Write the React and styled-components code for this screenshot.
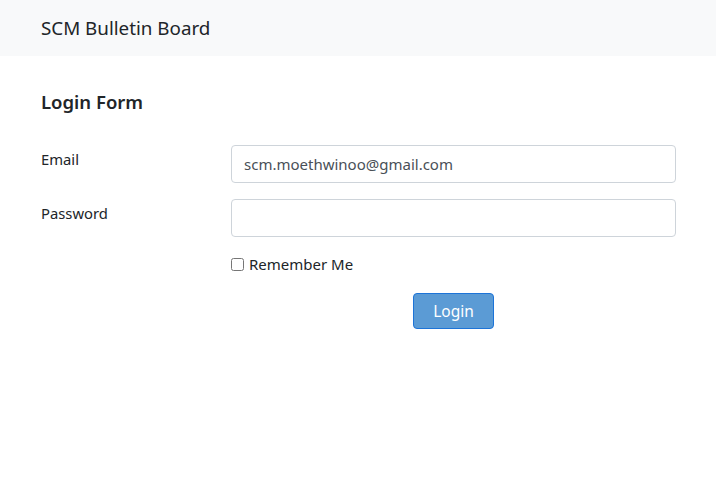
import React from 'react';
import styled, { createGlobalStyle } from 'styled-components';

const GlobalStyle = createGlobalStyle`
  body {
    margin: 0;
    background: #fff;
    font-family: "Noto Sans", "Open Sans", sans-serif;
    color: #212529;
  }
`;

const Navbar = styled.nav`
  height: 56px;
  background: #f8f9fa;
  display: flex;
  align-items: center;
  padding: 0 41px;
`;

const Brand = styled.span`
  font-size: 18.8px;
  color: #212529;
`;

const Main = styled.main`
  padding: 33px 40px 0 41px;
`;

const Title = styled.h2`
  margin: 0 0 31px;
  font-size: 18.5px;
  line-height: 25px;
  font-weight: 600;
`;

const Row = styled.div`
  display: grid;
  grid-template-columns: 190px 1fr;
  margin-bottom: ${({ gap }) => gap || 16}px;
`;

const Label = styled.label`
  font-size: 14.8px;
  padding-top: 4px;
`;

const Input = styled.input`
  box-sizing: border-box;
  width: 100%;
  height: 38px;
  padding: 0 12px;
  border: 1px solid #ced4da;
  border-radius: 4px;
  font-family: inherit;
  font-size: 15px;
  color: #495057;
  outline: none;
`;

const Check = styled.label`
  grid-column: 2;
  display: flex;
  align-items: center;
  gap: 5px;
  font-size: 15px;
  line-height: 20px;
  input { margin: 0; width: 13px; height: 13px; }
`;

const Actions = styled.div`
  grid-column: 2;
  display: flex;
  justify-content: center;
`;

const Button = styled.button`
  width: 81px;
  height: 36px;
  background: #5b9bd5;
  border: 1px solid #1d74d8;
  border-radius: 4px;
  color: #fff;
  font-family: inherit;
  font-size: 15.5px;
`;

export default function App() {
  return (
    <>
      <GlobalStyle />
      <Navbar>
        <Brand>SCM Bulletin Board</Brand>
      </Navbar>
      <Main>
        <Title>Login Form</Title>
        <Row>
          <Label>Email</Label>
          <Input defaultValue="scm.moethwinoo@gmail.com" />
        </Row>
        <Row gap={17}>
          <Label>Password</Label>
          <Input type="password" />
        </Row>
        <Row gap={19}>
          <Check>
            <input type="checkbox" />
            Remember Me
          </Check>
        </Row>
        <Row>
          <Actions>
            <Button>Login</Button>
          </Actions>
        </Row>
      </Main>
    </>
  );
}
